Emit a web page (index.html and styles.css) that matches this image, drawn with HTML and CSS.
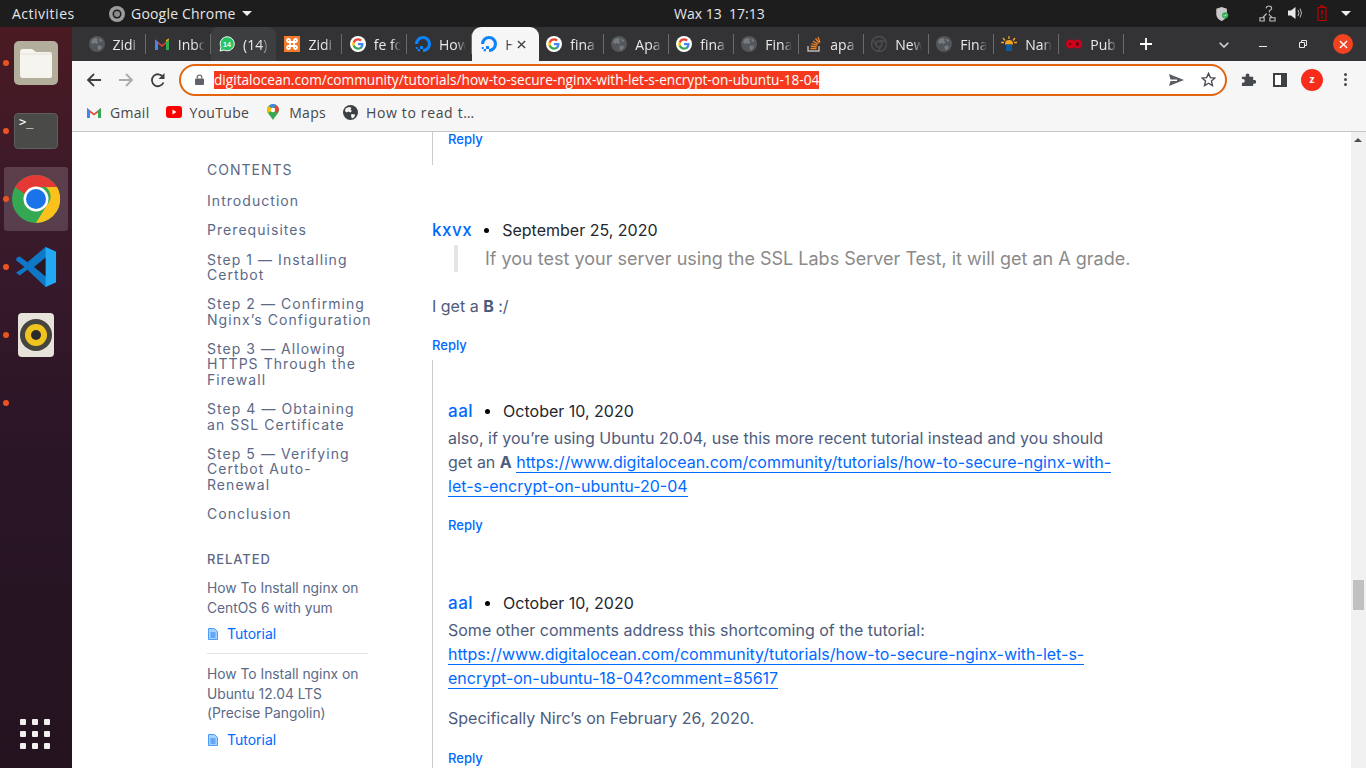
FILE: index.html
```html
<!DOCTYPE html>
<html lang="en">
<head>
<meta charset="utf-8">
<title>How To Secure Nginx</title>
<link rel="stylesheet" href="styles.css">
</head>
<body>
<svg class="defs" width="0" height="0" aria-hidden="true">
  <symbol id="globe" viewBox="0 0 16 16">
    <circle cx="8" cy="8" r="8" fill="#53575b"/>
    <path d="M3 3.500 6.500 2 9 3 8 5 9.500 6 8 8 5.500 7 4 8 2 6.500ZM9 9.500l4 .5-1 3-2.500 1.500-1-3ZM11 2.500l2.500 2.500-1.500 1-2-2Z" fill="#777b7f"/>
  </symbol>
  <symbol id="gg" viewBox="0 0 16 16">
    <circle cx="8" cy="8" r="8" fill="#fff"/>
    <path d="M13.500 8.200c0-.4 0-.8-.1-1.200H8v2.300h3.100c-.1.700-.5 1.300-1.100 1.700v1.400h1.800c1.100-1 1.700-2.500 1.700-4.200Z" fill="#4285f4"/>
    <path d="M8 13.700c1.500 0 2.800-.5 3.800-1.400L10 10.900c-.5.300-1.200.6-2 .6-1.500 0-2.800-1-3.200-2.400H2.900v1.500C3.900 12.500 5.800 13.700 8 13.700Z" fill="#34a853"/>
    <path d="M4.800 9.100c-.2-.7-.2-1.500 0-2.200V5.400H2.900c-.8 1.600-.8 3.600 0 5.200Z" fill="#fbbc05"/>
    <path d="M8 4.500c.8 0 1.600.3 2.200.9l1.600-1.600C10.800 2.800 9.500 2.300 8 2.300c-2.200 0-4.100 1.200-5.100 3.100l1.900 1.500C5.200 5.500 6.500 4.500 8 4.500Z" fill="#ea4335"/>
  </symbol>
  <symbol id="do" viewBox="0 0 16 16">
    <path d="M8 16v-3.100A4.900 4.900 0 1 0 3.100 8H0a8 8 0 1 1 8 8Z" fill="#0a84ff"/>
    <path d="M8 12.900H5v-3h3ZM5 15.300H2.700V12.900H5ZM2.700 12.900H.8v-1.900h1.900Z" fill="#0a84ff"/>
  </symbol>
  <symbol id="doc" viewBox="0 0 10 12">
    <path d="M.5.500h6l3 3v8H.5Z" fill="#a9d0ff" stroke="#4a9dff" stroke-width="1"/>
    <path d="M2.500 5h5M2.500 7h5M2.500 9h5" stroke="#1d7ff5" stroke-width="1"/>
  </symbol>
</svg>

<header class="topbar">
  <span class="activities">Activities</span>
  <span class="appname">
    <svg class="appicon" viewBox="0 0 16 16"><circle cx="8" cy="8" r="8" fill="#9c9c9c"/><circle cx="8" cy="8" r="4.500" fill="#1d1d1d"/><circle cx="8" cy="8" r="3" fill="#8a8a8a"/></svg>
    Google Chrome
    <i class="caret"></i>
  </span>
  <span class="clock">Wax 13&nbsp; 17:13</span>
  <span class="tray">
    <svg class="t-shield" viewBox="0 0 16 18"><path d="M7 1 13 3v6c0 4-3 6.500-6 8-3-1.500-6-4-6-8V3Z" fill="#c9c9c9"/><circle cx="11" cy="10.500" r="3.500" fill="#2fb24c"/><path d="m9.500 10.500 1 1 2-2" stroke="#fff" fill="none"/></svg>
    <svg class="t-net" viewBox="0 0 18 18" fill="none" stroke="#bdbdbd" stroke-width="1.200"><path d="M7.500 3.500Q8 1 10.500 1t3 2.200q0 1.800-2.500 3V8"/><path d="M11 9.500v1.500"/><path d="M1 17v-3.500h4.500V17ZM11.500 17v-3.500H17V17ZM4 13.500 8 9M14 13.500 11.500 11"/></svg>
    <svg class="t-vol" viewBox="0 0 16 16"><path d="M1 5.500h3L8.500 2v12L4 10.500H1Z" fill="#e8e8e8"/><path d="M11 5q2 3 0 6M13 3.500q3 4.500 0 9" stroke="#bbb" fill="none"/></svg>
    <svg class="t-bat" viewBox="0 0 10 16"><path d="M1 2.500h8v13H1ZM3.500 .8h3v1.700h-3Z" fill="none" stroke="#c00000" stroke-width="1.200"/><path d="M4.300 5h1.400v5H4.300ZM4.300 11.500h1.400v1.500H4.300Z" fill="#c00000"/></svg>
    <i class="caret"></i>
  </span>
</header>

<div class="desk">
  <aside class="dock">
    <div class="slot s-files"><i class="pip"></i>
      <svg class="dk-files" viewBox="0 0 44 44"><rect width="44" height="44" rx="5" fill="#b3ae9c"/><path d="M6 11q0-3 3-3h9l4 3h14q2 0 2 3v21q0 2-3 2H9q-3 0-3-3Z" fill="#f6f4ee"/><path d="M6 13h32" stroke="#e4e1d8"/></svg>
    </div>
    <div class="slot s-term"><i class="pip"></i>
      <div class="dk-term"><span>&gt;_</span></div>
    </div>
    <div class="slot s-chrome active"><i class="pip"></i>
      <svg class="dk-chrome" viewBox="0 0 48 48">
        <circle cx="24" cy="24" r="24" fill="#34a853"/>
        <path d="M24 0A24 24 0 0 1 45 12H24a12 12 0 0 0-11 7L3 12A24 24 0 0 1 24 0Z" fill="#e53935"/>
        <path d="M45 12a24 24 0 0 1-21 36L35 30a12 12 0 0 0-1-18Z" fill="#fcc21b"/>
        <circle cx="24" cy="24" r="12.500" fill="#fff"/><circle cx="24" cy="24" r="10" fill="#1a73e8"/>
      </svg>
    </div>
    <div class="slot s-code"><i class="pip"></i>
      <svg class="dk-code" viewBox="0 0 44 44">
        <path d="M32 1 43 6v32l-11 5L13 25l-8 6-4-3 9-6-9-7 1-3 3-1 8 6Z" fill="#0f78c6"/>
        <path d="M32 1 43 6v32l-11 5Z" fill="#23a8f2"/>
        <path d="M32 12 20 22l12 10Z" fill="#2a1726"/>
      </svg>
    </div>
    <div class="slot s-rhythm"><i class="pip"></i>
      <svg class="dk-rhythm" viewBox="0 0 36 44"><rect width="36" height="44" rx="4" fill="#e7e3da"/><circle cx="18" cy="22" r="16" fill="#46443f"/><circle cx="18" cy="22" r="11" fill="#f0c420"/><circle cx="18" cy="22" r="5" fill="#2b2b2b"/></svg>
    </div>
    <div class="slot s-empty"><i class="pip"></i></div>
    <div class="grid9"><i></i><i></i><i></i><i></i><i></i><i></i><i></i><i></i><i></i></div>
  </aside>

  <div class="browser">
    <div class="tabstrip">
      <div class="tab"><svg class="fav"><use href="#globe"/></svg><span class="ttl">Zidi</span></div>
      <div class="tab"><svg class="fav" viewBox="0 0 16 16"><path d="M1 14V3.500L8 9l7-5.500V14h-3V7.500L8 11 4 7.500V14Z" fill="#ea4335"/><path d="M1 14V3.500L4 6V14Z" fill="#4285f4"/><path d="M12 14V6l3-2.500V14Z" fill="#34a853"/><path d="M12 6l3-2.500v-1L12 4Z" fill="#fbbc05"/></svg><span class="ttl">Inbo</span></div>
      <div class="tab hovered"><svg class="fav" viewBox="0 0 16 16"><path d="M1 15l1-4a7 7 0 1 1 3 3Z" fill="#25c463" stroke="#fff"/><text x="8" y="10.500" class="wa">14</text></svg><span class="ttl">(14)</span></div>
      <div class="tab"><svg class="fav" viewBox="0 0 16 16"><rect width="16" height="16" fill="#f47b28"/><path d="M6 6H4.500A1.500 1.500 0 1 1 6 4.500V11.500A1.500 1.500 0 1 1 4.500 10H11.500A1.500 1.500 0 1 1 10 11.500V4.500A1.500 1.500 0 1 1 11.500 6Z" fill="none" stroke="#fff" stroke-width="1.800"/></svg><span class="ttl">Zidi</span></div>
      <div class="tab"><svg class="fav"><use href="#gg"/></svg><span class="ttl">fe fo</span></div>
      <div class="tab"><svg class="fav"><use href="#do"/></svg><span class="ttl">How</span></div>
      <div class="tab current"><svg class="fav"><use href="#do"/></svg><span class="ttl short">H</span><svg class="x" viewBox="0 0 10 10"><path d="m1 1 8 8M9 1 1 9" stroke="#3c4043" stroke-width="1.500"/></svg></div>
      <div class="tab"><svg class="fav"><use href="#gg"/></svg><span class="ttl">fina</span></div>
      <div class="tab"><svg class="fav"><use href="#globe"/></svg><span class="ttl">Apa</span></div>
      <div class="tab"><svg class="fav"><use href="#gg"/></svg><span class="ttl">fina</span></div>
      <div class="tab"><svg class="fav"><use href="#globe"/></svg><span class="ttl">Fina</span></div>
      <div class="tab"><svg class="fav" viewBox="0 0 16 16"><path d="M2 10v5h11v-5" fill="none" stroke="#bcbbbb" stroke-width="1.400"/><path d="M4.500 12.500h6M4.700 10l6 .8M5.400 7.500l5.800 1.900M7 5l5 3.100M9.500 2.500l3.800 4.500M12 1l2 5.500" stroke="#f48024" stroke-width="1.300"/></svg><span class="ttl">apa</span></div>
      <div class="tab"><svg class="fav" viewBox="0 0 16 16"><circle cx="8" cy="8" r="7.500" fill="none" stroke="#4a4d50" stroke-width="1.500"/><circle cx="8" cy="8" r="3" fill="none" stroke="#4a4d50" stroke-width="1.500"/><path d="M8 5h7M5.500 9.500 2 3.500M10.500 9.500 7 15" stroke="#4a4d50" stroke-width="1.500"/></svg><span class="ttl">New</span></div>
      <div class="tab"><svg class="fav"><use href="#globe"/></svg><span class="ttl">Fina</span></div>
      <div class="tab"><svg class="fav" viewBox="0 0 16 16"><path d="M4 8a4 4 0 0 1 8 0v.5H4Z" fill="#f7a41d"/><path d="M8 0v3M2 2l2 2.500M14 2l-2 2.500M0 6.500h3M13 6.500h3" stroke="#f7a41d" stroke-width="1.300"/><rect x="5" y="8.500" width="6" height="6.500" fill="#0e5a9c"/></svg><span class="ttl">Nan</span></div>
      <div class="tab"><svg class="fav" viewBox="0 0 16 16"><circle cx="4.500" cy="8" r="4.500" fill="#d0021b"/><circle cx="11.500" cy="8" r="4.500" fill="#d0021b"/><path d="M3 7l1 2 1-2M10 7h3l-3 2h3" stroke="#2a0006" stroke-width=".8" fill="none"/></svg><span class="ttl">Pub</span></div>
      <svg class="plus" viewBox="0 0 12 12"><path d="M6 0v12M0 6h12" stroke="#fff" stroke-width="1.800"/></svg>
      <svg class="chev" viewBox="0 0 10 6"><path d="m.7.7 4.300 4.300 4.300-4.300" stroke="#dadce0" stroke-width="1.500" fill="none"/></svg>
      <i class="wmin"></i>
      <svg class="wres" viewBox="0 0 8 8"><path d="M.5 2.500h5v5h-5ZM2.500 2.500v-2h5v5h-2" fill="none" stroke="#e8e8e8"/></svg>
      <span class="wclose"><svg viewBox="0 0 10 10"><path d="m1 1 8 8M9 1 1 9" stroke="#fff" stroke-width="1.500"/></svg></span>
    </div>

    <div class="toolbar">
      <svg class="nav-ic first" viewBox="0 0 16 16"><path d="M15 8H2M8 2 2 8l6 6" fill="none" stroke="#3c4043" stroke-width="1.800"/></svg>
      <svg class="nav-ic" viewBox="0 0 16 16"><path d="M1 8h13M8 2l6 6-6 6" fill="none" stroke="#a9abad" stroke-width="1.800"/></svg>
      <svg class="nav-ic" viewBox="0 0 16 16"><path d="M13.500 10.500A6 6 0 1 1 13 5" fill="none" stroke="#3c4043" stroke-width="1.800"/><path d="M14.500 1v6h-6Z" fill="#3c4043"/></svg>
      <div class="omni">
        <svg class="lock" viewBox="0 0 10 12"><path d="M2.500 5V3.500a2.500 2.500 0 0 1 5 0V5" fill="none" stroke="#5f6368" stroke-width="1.300"/><rect y="5" width="10" height="7" rx="1" fill="#5f6368"/></svg>
        <span class="url">digitalocean.com/community/tutorials/how-to-secure-nginx-with-let-s-encrypt-on-ubuntu-18-04</span>
        <svg class="send" viewBox="0 0 15 12"><path d="M0 0 15 6 0 12l1.500-5H8V5.500H1.500Z" fill="#5a5e62"/></svg>
        <svg class="star" viewBox="0 0 16 16"><path d="M8 1.500l2 4.500 4.800.5-3.600 3.200 1 4.800L8 12l-4.200 2.500 1-4.800L1.200 6.500 6 6Z" fill="none" stroke="#4a4e52" stroke-width="1.500"/></svg>
      </div>
      <svg class="ext" viewBox="0 0 16 16"><path d="M1 5h4V3.500a2 2 0 0 1 4 0V5h4v3.500h1.200a2 2 0 0 1 0 4H13V15H1v-3.500h1a2 2 0 0 0 0-4H1Z" fill="#46494d"/></svg>
      <svg class="side" viewBox="0 0 14 14"><rect x="1" y="1" width="12" height="12" fill="#fff" stroke="#3c4043" stroke-width="2"/><rect x="8" y="1" width="5" height="12" fill="#3c4043"/></svg>
      <span class="avatar">z</span>
      <span class="kebab"><i></i><i></i><i></i></span>
    </div>

    <div class="bookmarks">
      <span class="bm"><svg viewBox="0 0 16 12"><path d="M1 12V2l7 5.500L15 2v10h-3V6.500L8 9.500 4 6.500V12Z" fill="#ea4335"/><path d="M1 12V2l3 2.500V12Z" fill="#4285f4"/><path d="M12 12V4.500L15 2v10Z" fill="#34a853"/></svg>Gmail</span>
      <span class="bm"><svg viewBox="0 0 16 12"><rect width="16" height="12" rx="3" fill="#f00"/><path d="M6.500 3.500v5l4-2.500Z" fill="#fff"/></svg>YouTube</span>
      <span class="bm"><svg class="pin" viewBox="0 0 12 16"><path d="M6 0a6 6 0 0 1 6 6c0 3-3 5-6 10C3 11 0 9 0 6a6 6 0 0 1 6-6Z" fill="#34a853"/><path d="M2 2 6 6l-5 3Q0 7 0 6q0-2 2-4Z" fill="#fbbc05"/><path d="M2 2a6 6 0 0 1 7-1.200L6 4Z" fill="#4285f4"/><path d="M9 1a6 6 0 0 1 3 5l-2.500 3L6 6Z" fill="#ea4335"/><circle cx="6" cy="6" r="2.200" fill="#fff"/></svg>Maps</span>
      <span class="bm bm-long"><svg class="g14" viewBox="0 0 16 16"><circle cx="8" cy="8" r="8" fill="#3c4043"/><path d="M3 3.500 6.500 2 9 3 8 5 9.500 6 8 8 5.500 7 4 8 2 6.500ZM9 9.500l4 .5-1 3-2.500 1.500-1-3Z" fill="#f5f5f5"/></svg>How to read t…</span>
    </div>

    <div class="viewport">
      <nav class="toc">
        <h4 class="toc-h">CONTENTS</h4>
        <a class="toc-i">Introduction</a>
        <a class="toc-i">Prerequisites</a>
        <a class="toc-i">Step 1 — Installing Certbot</a>
        <a class="toc-i">Step 2 — Confirming Nginx’s Configuration</a>
        <a class="toc-i">Step 3 — Allowing HTTPS Through the Firewall</a>
        <a class="toc-i">Step 4 — Obtaining an SSL Certificate</a>
        <a class="toc-i">Step 5 — Verifying Certbot Auto-Renewal</a>
        <a class="toc-i">Conclusion</a>
        <h4 class="rel-h">RELATED</h4>
        <div class="rel">
          <p class="rel-t">How To Install nginx on CentOS 6 with yum</p>
          <a class="rel-k"><svg class="docic"><use href="#doc"/></svg>Tutorial</a>
        </div>
        <div class="rel last">
          <p class="rel-t">How To Install nginx on Ubuntu 12.04 LTS (Precise Pangolin)</p>
          <a class="rel-k"><svg class="docic"><use href="#doc"/></svg>Tutorial</a>
        </div>
      </nav>

      <main class="thread">
        <div class="nest n0"><a class="reply">Reply</a></div>

        <div class="meta m1"><a class="who">kxvx</a><i class="dot"></i><span class="when">September 25, 2020</span></div>
        <blockquote class="quote">If you test your server using the SSL Labs Server Test, it will get an A grade.</blockquote>
        <p class="para p1">I get a <b>B</b> :/</p>
        <a class="reply r1">Reply</a>

        <div class="nest n1">
          <div class="meta"><a class="who">aal</a><i class="dot"></i><span class="when">October 10, 2020</span></div>
          <p class="para body">also, if you’re using Ubuntu 20.04, use this more recent tutorial instead and you should get an <b>A</b> <a class="lnk">https://www.digitalocean.com/community/tutorials/how-to-secure-nginx-with-let-s-encrypt-on-ubuntu-20-04</a></p>
          <a class="reply r2">Reply</a>

          <div class="meta m3"><a class="who">aal</a><i class="dot"></i><span class="when">October 10, 2020</span></div>
          <p class="para body">Some other comments address this shortcoming of the tutorial: <a class="lnk">https://www.digitalocean.com/community/tutorials/how-to-secure-nginx-with-let-s-encrypt-on-ubuntu-18-04?comment=85617</a></p>
          <p class="para p2">Specifically Nirc’s on February 26, 2020.</p>
          <a class="reply r3">Reply</a>
        </div>
      </main>

      <div class="scrollbar"><i class="arrow"></i><i class="thumb"></i></div>
    </div>
  </div>
</div>
</body>
</html>
```

FILE: styles.css
```css
* { box-sizing: border-box; }
html, body { margin: 0; height: 768px; overflow: hidden; }
body { width: 1366px; font-family: "Noto Sans", sans-serif; background: #fff; }
.defs { position: absolute; }
p, h4, blockquote { margin: 0; }

/* Top bar */
.topbar { height: 27px; background: #1d1d1d; color: #e6e6e6; font-size: 14px; display: flex; align-items: center; position: relative; }
.activities { margin-left: 12px; width: 97px; font-family: "Open Sans", sans-serif; font-size: 14px; letter-spacing: .5px; }
.appname { display: flex; align-items: center; gap: 6px; font-family: "Open Sans", sans-serif; letter-spacing: .2px; }
.appicon { width: 16px; height: 16px; }
.caret { display: inline-block; width: 0; height: 0; border: 5px solid transparent; border-top-color: #eee; border-bottom: 0; }
.clock { position: absolute; left: 674px; top: 4px; font-family: "Open Sans", sans-serif; font-size: 14px; }
.tray { position: absolute; left: 1215px; top: 0; height: 27px; width: 151px; }
.tray svg, .tray .caret { position: absolute; }
.t-shield { left: 0; top: 6px; width: 15px; height: 16px; }
.t-net { left: 44px; top: 5px; width: 17px; height: 17px; }
.t-vol { left: 72px; top: 5px; width: 16px; height: 16px; }
.t-bat { left: 102px; top: 5px; width: 10px; height: 16px; }
.tray .caret { left: 126px; top: 11px; }

/* Dock */
.desk { display: flex; height: 741px; }
.dock { width: 72px; flex: none; background: linear-gradient(180deg, #4a1a22 0, #3a1a2b 25%, #291526 60%, #24131f 100%); position: relative; }
.slot { position: absolute; left: 4px; width: 64px; height: 64px; display: flex; align-items: center; justify-content: center; border-radius: 3px; }
.pip { position: absolute; left: -1px; top: 29px; width: 6px; height: 6px; border-radius: 50%; background: #e95420; }
.s-files { top: 4px; }
.s-term { top: 72px; }
.s-chrome { top: 140px; }
.s-code { top: 208px; }
.s-rhythm { top: 276px; }
.s-empty { top: 344px; }
.active { background: rgba(255,255,255,.16); }
.dk-files { width: 44px; height: 44px; }
.dk-term { width: 44px; height: 36px; background: #4a4b49; border: 1px solid #5e5f5d; border-radius: 4px; color: #fff; font: 12px/14px "DejaVu Sans Mono", monospace; padding: 1px 4px; }
.dk-chrome { width: 48px; height: 48px; }
.dk-code { width: 42px; height: 42px; }
.dk-rhythm { width: 36px; height: 44px; }
.grid9 { position: absolute; left: 20px; top: 692px; width: 32px; height: 32px; display: grid; grid-template-columns: repeat(3, 6px); grid-template-rows: repeat(3, 6px); gap: 6px; }
.grid9 i { background: #f2f0ee; border-radius: 1px; }

/* Browser */
.browser { flex: 1; min-width: 0; display: flex; flex-direction: column; }
.tabstrip { height: 34px; background: #333335; display: flex; padding-left: 8.500px; position: relative; flex: none; }
.tab { width: 65.300px; height: 34px; flex: none; display: flex; align-items: center; padding-left: 8px; position: relative; color: #e8eaed; font-size: 14px; }
.tab::after { content: ""; position: absolute; right: 0; top: 7px; height: 20px; width: 1px; background: #6a6b6d; }
.tab.hovered { background: #3d3e40; border-radius: 8px 8px 0 0; }
.tab.current { width: 67px; padding-left: 9px; background: #f6f6f6; color: #45474a; border-radius: 9px 9px 0 0; }
.current ~ .tab { width: 65px; padding-left: 7px; }
.tab.current::after, .tab.hovered::after { display: none; }
.fav { width: 16px; height: 16px; flex: none; }
.ttl { margin-left: 8px; width: 27px; white-space: nowrap; overflow: hidden; font-family: "Open Sans", sans-serif; font-size: 14px; -webkit-mask-image: linear-gradient(90deg, #000 65%, transparent); mask-image: linear-gradient(90deg, #000 65%, transparent); }
.ttl.short { width: 8px; }
.wa { font: bold 7px "Liberation Sans", sans-serif; fill: #fff; text-anchor: middle; }
.x { width: 9px; height: 9px; margin-left: 4px; flex: none; }
.plus { position: absolute; left: 1068px; top: 11px; width: 12px; height: 12px; }
.chev { position: absolute; left: 1147px; top: 15px; width: 10px; height: 6px; }
.wmin { position: absolute; left: 1187px; top: 19px; width: 8px; height: 1px; background: #eee; }
.wres { position: absolute; left: 1227px; top: 13px; width: 8px; height: 8px; }
.wclose { position: absolute; left: 1261px; top: 7px; width: 20px; height: 20px; border-radius: 50%; background: #f1431f; display: flex; align-items: center; justify-content: center; }
.wclose svg { width: 9px; height: 9px; }

.toolbar { height: 37px; background: #f6f6f6; display: flex; align-items: center; flex: none; padding-left: 14px; }
.nav-ic { width: 16px; height: 16px; margin-right: 16px; flex: none; }
.omni { width: 1048px; height: 32px; margin-left: -3px; border: 2px solid #e2640f; border-radius: 16px; background: #fff; display: flex; align-items: center; padding-left: 14px; position: relative; }
.lock { width: 9px; height: 11px; flex: none; }
.url { margin-left: 10px; background: #f4391f; color: #fff; font-family: "Open Sans", sans-serif; font-size: 13.650px; line-height: 18px; white-space: nowrap; }
.send { position: absolute; left: 988px; top: 8px; width: 15px; height: 12px; }
.star { position: absolute; left: 1020px; top: 6px; width: 15px; height: 15px; }
.ext { width: 15px; height: 15px; margin-left: 14px; flex: none; }
.side { width: 14px; height: 14px; margin-left: 17px; flex: none; }
.avatar { width: 22px; height: 22px; margin-left: 14px; border-radius: 50%; background: #f62d1b; color: #fff; font: bold 10px/21px "Open Sans", sans-serif; text-align: center; flex: none; }
.kebab { margin-left: 21px; display: grid; gap: 2px; }
.kebab i { width: 3px; height: 3px; background: #46494d; border-radius: 50%; }

.bookmarks { height: 34px; background: #f6f6f6; border-bottom: 1px solid #c6c6c6; display: flex; align-items: center; padding: 0 0 5px 14px; flex: none; font-family: "Open Sans", sans-serif; font-size: 14px; letter-spacing: .3px; color: #45474a; }
.bm { display: flex; align-items: center; gap: 8px; margin-right: 16px; }
.bm svg { width: 16px; height: 12px; flex: none; }
.bm .pin { width: 12px; height: 16px; margin: 0 2px; }
.bm .g14 { width: 15px; height: 15px; }
.bm-long { letter-spacing: .65px; margin-left: 1px; }

/* Page */
.viewport { flex: 1; min-height: 0; display: flex; background: #fff; font-family: Inter, sans-serif; overflow: hidden; }
.toc { width: 360px; flex: none; padding: 30px 0 0 135px; }
.toc-h { font-size: 14px; line-height: 16px; font-weight: 400; letter-spacing: 1px; color: #5b6987; margin-bottom: 15px; }
.toc-i { display: block; width: 165px; font-size: 14px; line-height: 15.400px; letter-spacing: 1.050px; color: #5b6987; margin-bottom: 13.900px; }
.rel-h { font-size: 13px; line-height: 16px; font-weight: 500; letter-spacing: .9px; color: #5b6987; margin: 30px 0 11.700px; }
.rel { width: 161px; border-bottom: 1px solid #dfe2e8; padding-bottom: 9px; margin-bottom: 11px; }
.rel.last { border: 0; }
.rel-t { font-size: 13.800px; line-height: 19.600px; color: #5b6987; width: 161px; }
.rel-k { display: flex; align-items: center; font-size: 14px; line-height: 20px; color: #0069ff; margin-top: 6px; }
.docic { width: 10px; height: 12px; margin: 0 9px 0 1px; }

.thread { width: 919px; flex: none; position: relative; }
.reply { display: block; color: #0069ff; font-size: 13px; line-height: 16px; font-weight: 500; }
.nest { border-left: 1px solid #ccc; padding-left: 15px; }
.n0 { height: 33px; }
.n0 .reply { position: relative; top: -1px; }
.meta { display: flex; align-items: center; height: 24px; }
.m1 { margin-top: 53px; }
.m3 { margin-top: 58px; }
.who { color: #0069ff; font-size: 17px; font-weight: 500; letter-spacing: .5px; }
.dot { width: 5px; height: 5px; border-radius: 50%; background: #000; margin: 0 13px 0 12px; }
.when { font-size: 16px; color: #24272d; }
.quote { margin: 3px 0 0 22px; border-left: 4px solid #e5e5e5; padding-left: 27px; height: 27px; line-height: 27px; font-size: 18px; color: #8a8a8a; white-space: nowrap; }
.para { font-size: 16px; line-height: 24px; color: #4d5b7c; width: 672px; }
.body { margin-top: 3px; }
.p1 { margin-top: 22px; }
.p2 { margin-top: 16px; }
.r1 { margin-top: 19px; }
.r2 { margin-top: 19px; }
.r3 { margin-top: 20px; }
.n1 { margin-top: 7px; padding-top: 39px; padding-bottom: 40px; }
.lnk { color: #0069ff; border-bottom: 1px solid #0069ff; }
.para b { font-weight: 700; }

.scrollbar { flex: none; width: 15px; margin-left: auto; background: #f1f1f1; position: relative; }
.arrow { position: absolute; left: 3px; top: 6px; width: 0; height: 0; border: 4px solid transparent; border-bottom: 4px solid #505050; border-top: 0; }
.thumb { position: absolute; left: 2px; top: 448px; width: 11px; height: 30px; background: #c1c1c1; }
```
